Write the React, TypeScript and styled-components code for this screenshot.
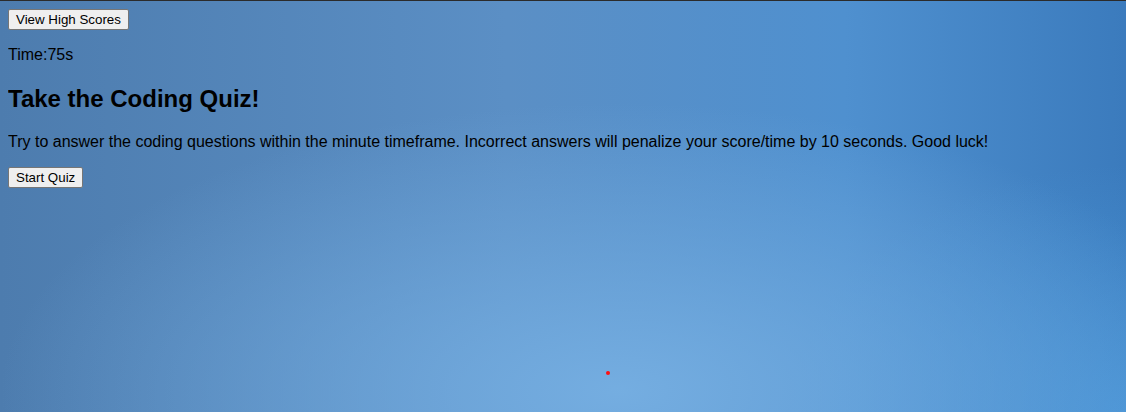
import React from "react";
import styled, { createGlobalStyle } from "styled-components";

const Global = createGlobalStyle`
  html {
    height: 100%;
    border-top: 1px solid #2b2b2b;
    box-sizing: border-box;
    background-color: #5b90c6;
    background:
      radial-gradient(ellipse 55% 70% at 55% 95%, rgba(118, 175, 226, 0.95) 0%, rgba(118, 175, 226, 0) 100%),
      radial-gradient(ellipse 30% 60% at 100% 100%, rgba(74, 152, 218, 0.8) 0%, rgba(74, 152, 218, 0) 100%),
      linear-gradient(to right, #4d7cae 0%, #5b8fc5 45%, #4f90cf 75%, #3b7bbd 100%);
    background-attachment: fixed;
  }
  body {
    margin: 8px;
    min-height: calc(100% - 16px);
    font-family: "Liberation Sans", Arial, sans-serif;
    color: #000;
  }
`;

const Page = styled.main`
  display: block;
`;

const Button = styled.button`
  font-family: "Liberation Sans", Arial, sans-serif;
  font-size: 13.333px;
  color: #000;
  background: #efefef;
  border: 1px solid #767676;
  border-radius: 2px;
  padding: 1px 7px;
  height: 21px;
  line-height: normal;
  cursor: pointer;
`;

const Timer = styled.p`
  font-size: 16px;
  margin: 16px 0;
`;

const Title = styled.h2`
  font-size: 24px;
  line-height: 29px;
  font-weight: bold;
  margin: 19.92px 0;
`;

const Intro = styled.p`
  font-size: 16px;
  margin: 16px 0;
`;

const Dot = styled.span`
  position: absolute;
  left: 606px;
  top: 371px;
  width: 4px;
  height: 4px;
  border-radius: 50%;
  background: #ff1010;
`;

export default function App() {
  return (
    <>
      <Global />
      <Page>
        <Button>View High Scores</Button>
        <Timer>Time:75s</Timer>
        <Title>Take the Coding Quiz!</Title>
        <Intro>
          Try to answer the coding questions within the minute timeframe. Incorrect answers will penalize your
          score/time by 10 seconds. Good luck!
        </Intro>
        <Button>Start Quiz</Button>
      </Page>
      <Dot />
    </>
  );
}
